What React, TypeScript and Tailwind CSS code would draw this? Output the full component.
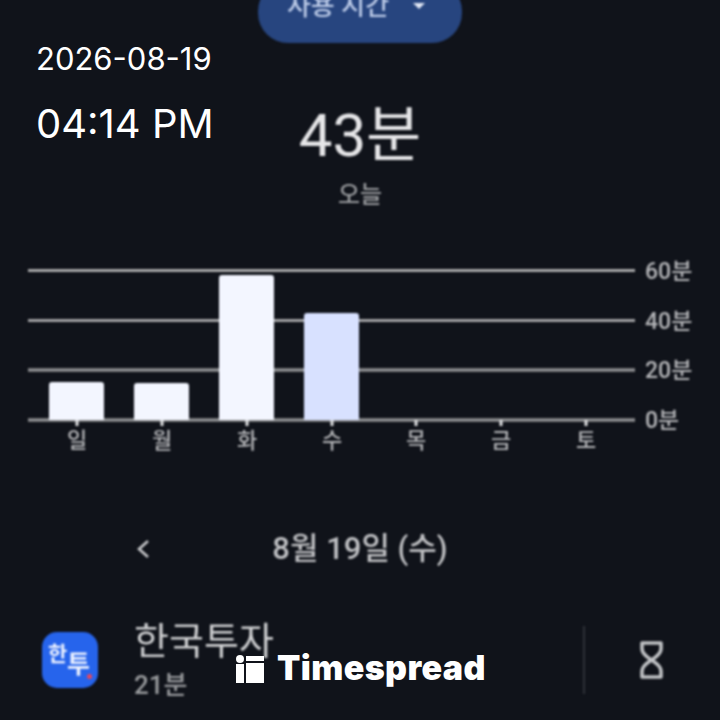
const days = [
  { label: "일", x: 77 },
  { label: "월", x: 162 },
  { label: "화", x: 247 },
  { label: "수", x: 332 },
  { label: "목", x: 416 },
  { label: "금", x: 501 },
  { label: "토", x: 586 },
];
const bars = [
  { x: 49, y: 382, fill: "#f3f6ff" },
  { x: 134, y: 383, fill: "#f3f6ff" },
  { x: 219, y: 275, fill: "#f3f6ff" },
  { x: 304, y: 313, fill: "#d8e1ff" },
];
const grid = [
  { y: 270.5, h: 2.6, c: "#c4c4c5", label: "60분" },
  { y: 320.5, h: 2.6, c: "#bcbcbe", label: "40분" },
  { y: 370, h: 3.4, c: "#8e8f91", label: "20분" },
  { y: 420, h: 3.4, c: "#8e8f91", label: "0분" },
];

function Chart() {
  return (
    <svg width="720" height="200" viewBox="0 260 720 200" className="block mt-[47px]">
      {grid.map((g) => (
        <g key={g.label}>
          <line x1="28" x2="635" y1={g.y} y2={g.y} stroke={g.c} strokeWidth={g.h} />
          <text x="645" y={g.y + 8} fontSize="23" fontWeight="500" fill="#b4b5b8">{g.label}</text>
        </g>
      ))}
      {days.map((d) => (
        <g key={d.label}>
          <line x1={d.x} x2={d.x} y1="420" y2="426" stroke="#e0e1e3" strokeWidth="3" />
          <text x={d.x} y="448" fontSize="22" fontWeight="500" fill="#b4b5b8" textAnchor="middle">{d.label}</text>
        </g>
      ))}
      {bars.map((b) => (
        <path
          key={b.x}
          d={`M${b.x} 420V${b.y + 3}Q${b.x} ${b.y} ${b.x + 3} ${b.y}H${b.x + 52}Q${b.x + 55} ${b.y} ${b.x + 55} ${b.y + 3}V420Z`}
          fill={b.fill}
        />
      ))}
    </svg>
  );
}

export default function App() {
  return (
    <div className="relative w-[720px] h-[720px] overflow-hidden bg-[#10131a] font-['Roboto','Noto_Sans_CJK_KR',sans-serif]">
      <div className="flex flex-col items-center blur-[1px]">
        <div className="-mt-[19px] w-[204px] h-[62px] rounded-[30px] bg-[#27457f] flex items-center justify-center gap-[24px] pb-[13px] pr-[8px]">
          <span className="text-[26px] leading-[30px] font-medium text-[#bccbe8]">사용 시간</span>
          <span className="w-0 h-0 border-x-[6px] border-x-transparent border-t-[6px] border-t-[#e3e9f6]" />
        </div>
        <div className="mt-[53px] text-[60px] leading-[80px] text-[#e6e6e8]">43분</div>
        <div className="mt-[1px] text-[24px] leading-[36px] font-medium text-[#9a9c9f]">오늘</div>
        <Chart />
        <div className="mt-[67px] w-full relative flex justify-center">
          <span className="text-[31px] leading-[44px] font-medium text-[#c0c1c4]">8월 19일 (수)</span>
          <svg className="absolute left-[135px] top-[11px]" width="16" height="22" viewBox="0 0 16 22" fill="none">
            <path d="M13 3 L4 11 L13 19" stroke="#c8c9cc" strokeWidth="2.6" />
          </svg>
        </div>
        <div className="mt-[49px] w-full flex items-center pl-[42px]">
          <div className="relative w-[56px] h-[56px] rounded-[15px] bg-[#2664ec]">
            <span className="absolute left-[6px] top-[9px] text-[21px] leading-[26px] font-bold text-[#eef3ff]">한</span>
            <span className="absolute left-[25px] top-[19px] text-[25px] leading-[28px] font-bold text-[#eef3ff]">투</span>
            <span className="absolute right-[6px] bottom-[9px] w-[5px] h-[5px] rounded-full bg-[#e8455a]" />
          </div>
          <div className="ml-[36px] w-[449px] flex flex-col">
            <span className="text-[38px] leading-[42px] text-[#cfd0d2]">한국투자</span>
            <span className="mt-[8px] text-[26px] leading-[30px] font-medium text-[#9a9c9f]">21분</span>
          </div>
          <div className="w-[2px] h-[68px] bg-[#2f3238]" />
          <svg className="ml-[54px]" width="26" height="38" viewBox="0 0 26 38" fill="none" stroke="#c0c2c5" strokeWidth="3.6" strokeLinejoin="round">
            <path d="M3 2H22V8Q22 13 12.500 19Q3 25 3 30V36H22V30Q22 25 12.500 19Q3 13 3 8Z" />
          </svg>
        </div>
      </div>

      <div className="absolute left-[36px] top-[39px] text-[31px] leading-[40px] text-white font-['Inter',sans-serif]">2026-08-19</div>
      <div className="absolute left-[36px] top-[99px] text-[40px] leading-[50px] text-white font-['Inter',sans-serif]">04:14 PM</div>

      <div className="absolute left-[236px] top-[652px] flex items-center">
        <svg width="28" height="30" viewBox="0 0 28 30" fill="#fff">
          <circle cx="4" cy="6" r="4" />
          <rect x="0" y="11" width="8" height="19" />
          <rect x="10" y="3" width="18" height="5" />
          <rect x="10" y="10" width="18" height="20" />
        </svg>
        <span className="ml-[13px] text-[34px] leading-[32px] font-black tracking-[0.4px] text-white font-['Inter',sans-serif]">Timespread</span>
      </div>
    </div>
  );
}
